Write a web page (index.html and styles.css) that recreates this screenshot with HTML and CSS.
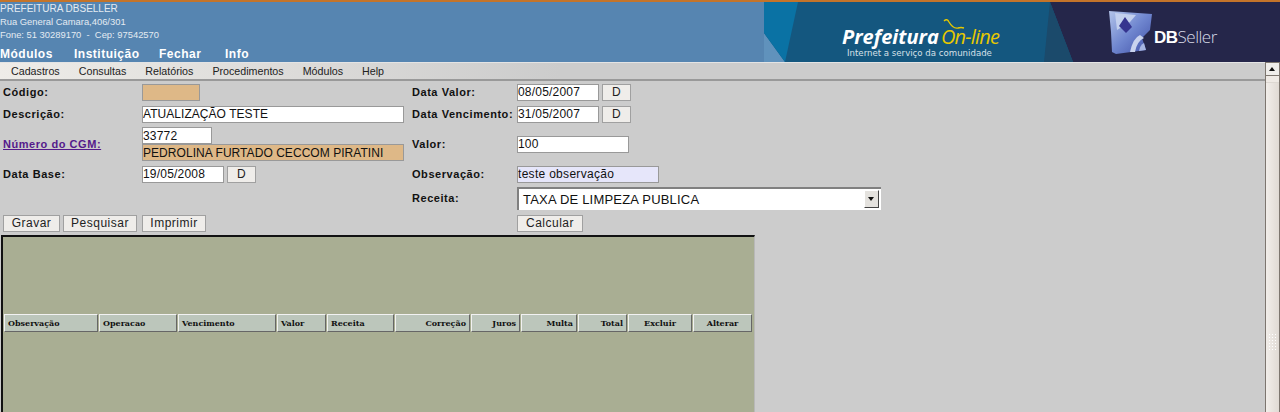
FILE: index.html
```html
<!DOCTYPE html>
<html>
<head>
  <meta http-equiv="CONTENT-TYPE" content="text/html; charset=UTF-8">
  <link rel="stylesheet" href="styles.css">
  <title>Prefeitura On-line</title>
</head>
<body>
  <div class="topo">
    <div class="topo-esq">
      <div class="instituicao">
        <div class="inst-nome">PREFEITURA DBSELLER</div>
        <div>Rua General Camara,406/301</div>
        <div>Fone: 51 30289170 &nbsp;-&nbsp; Cep: 97542570</div>
      </div>
      <div class="menu-topo">
        <a class="m1">Módulos</a>
        <a class="m2">Instituição</a>
        <a class="m3">Fechar</a>
        <a class="m4">Info</a>
      </div>
    </div>
    <div class="banner">
      <svg class="banner-fundo" width="516" height="60" viewBox="0 0 516 60">
        <defs>
          <linearGradient id="cubo" x1="0" y1="0" x2="1" y2="1">
            <stop offset="0" stop-color="#b3c4ea"/>
            <stop offset="0.5" stop-color="#6f86cf"/>
            <stop offset="1" stop-color="#3f4fa6"/>
          </linearGradient>
        </defs>
        <rect width="516" height="60" fill="#14577f"/>
        <polygon points="0,31 21,60 0,60" fill="#6092bc"/>
        <polygon points="0,0 34,0 21,60 0,31" fill="#0a72a4"/>
        <polygon points="286,0 516,0 516,60 309,60" fill="#25264a"/>
        <polygon points="286,0 309,60 280,60" fill="#1b4a6b"/>
        <polygon points="345,9 388,12 386,28 378,36 382,48 352,52 348,50 347,30" fill="url(#cubo)"/>
        <polygon points="351,11 372,13 366,20 353,28" fill="#c3d0ee"/>
        <polygon points="361,15 368,25 362,31 355,24" fill="#35348f"/>
        <path d="M366 50 q3 -14 10 -17 l4 3 q-7 3 -9 14 z" fill="#c9d3ee"/>
        <path d="M375 49 q1 -6 5 -8 l2 7 z" fill="#a7b6e2"/>
      </svg>
      <div class="po-logo">
        <div class="po-nome"><span class="po-pref">Prefeitura</span><span class="po-on">On-line</span></div>
        <div class="po-sub">Internet a serviço da comunidade</div>
      </div>
      <svg class="po-arco" width="24" height="14" viewBox="0 0 24 14">
        <path d="M2 3 q3 -3 5 1 q4 7 9 6 q3 -1 6 0" fill="none" stroke="#e6c800" stroke-width="1.4"/>
      </svg>
      <div class="db-logo"><b>DB</b><span>Seller</span></div>
    </div>
  </div>

  <div class="corpo">
    <div class="conteudo">
      <div class="barra-menu">
        <a>Cadastros</a>
        <a>Consultas</a>
        <a>Relatórios</a>
        <a>Procedimentos</a>
        <a>Módulos</a>
        <a>Help</a>
      </div>

      <form class="form-grid">
        <label class="rotulo">Código:</label>
        <div class="campo"><input class="inp readonly codigo" type="text" readonly></div>
        <label class="rotulo">Data Valor:</label>
        <div class="campo"><input class="inp data" value="08/05/2007"><button type="button" class="btn btn-d">D</button></div>

        <label class="rotulo">Descrição:</label>
        <div class="campo"><input class="inp descricao" value="ATUALIZAÇÃO TESTE"></div>
        <label class="rotulo">Data Vencimento:</label>
        <div class="campo"><input class="inp data" value="31/05/2007"><button type="button" class="btn btn-d">D</button></div>

        <a class="rotulo link">Número do CGM:</a>
        <div class="campo-duplo">
          <input class="inp numcgm" value="33772">
          <input class="inp readonly descricao" value="PEDROLINA FURTADO CECCOM PIRATINI" readonly>
        </div>
        <label class="rotulo">Valor:</label>
        <div class="campo"><input class="inp valor" value="100"></div>

        <label class="rotulo">Data Base:</label>
        <div class="campo"><input class="inp data" value="19/05/2008"><button type="button" class="btn btn-d">D</button></div>
        <label class="rotulo">Observação:</label>
        <div class="campo"><input class="inp obs" value="teste observação"></div>

        <div class="vazio"></div>
        <label class="rotulo">Receita:</label>
        <div class="campo">
          <div class="select">
            <span class="select-txt">TAXA DE LIMPEZA PUBLICA</span>
            <span class="select-seta"></span>
          </div>
        </div>

        <div class="botoes">
          <button type="button" class="btn b-gravar">Gravar</button>
          <button type="button" class="btn b-pesquisar">Pesquisar</button>
          <button type="button" class="btn b-imprimir">Imprimir</button>
        </div>
        <div></div>
        <div class="campo"><button type="button" class="btn b-calcular">Calcular</button></div>
      </form>

      <div class="quadro">
        <table class="tabela">
          <tr>
            <th class="c1">Observação</th>
            <th class="c2">Operacao</th>
            <th class="c3">Vencimento</th>
            <th class="c4">Valor</th>
            <th class="c5">Receita</th>
            <th class="c6 dir">Correção</th>
            <th class="c7 dir">Juros</th>
            <th class="c8 dir">Multa</th>
            <th class="c9 dir">Total</th>
            <th class="c10 meio">Excluir</th>
            <th class="c11 meio">Alterar</th>
          </tr>
        </table>
      </div>
    </div>

    <div class="scroll">
      <div class="scroll-up"></div>
      <div class="scroll-thumb">
        <div class="scroll-grip"></div>
      </div>
    </div>
  </div>
</body>
</html>
```

FILE: styles.css
```css
* {
  margin: 0;
  padding: 0;
  box-sizing: border-box;
}

body {
  width: 100%;
  height: 100vh;
  overflow: hidden;
  background: #cccccc;
  font-family: "Liberation Sans", Arial, sans-serif;
}

.topo {
  display: flex;
  justify-content: space-between;
  height: 62px;
  background: #5685b1;
  border-top: 2px solid #c4742a;
}

.instituicao {
  height: 45px;
  color: #e4ebf2;
  font-size: 9.4px;
  line-height: 13px;
}

.inst-nome {
  font-size: 10px;
}

.menu-topo {
  display: flex;
  color: #ffffff;
  font-size: 12px;
  font-weight: bold;
  letter-spacing: 0.5px;
  line-height: 15px;
}

.m1 { width: 74px; }
.m2 { width: 85px; }
.m3 { width: 66px; }

.banner {
  position: relative;
  width: 516px;
  height: 60px;
}

.banner-fundo {
  display: block;
}

.po-logo {
  position: absolute;
  top: 25px;
  left: 78px;
  width: 170px;
}

.po-nome {
  line-height: 20px;
  white-space: nowrap;
}

.po-pref {
  color: #ffffff;
  font-family: "Open Sans", sans-serif;
  font-size: 20px;
  font-weight: bold;
  font-style: italic;
}

.po-on {
  margin-left: 2px;
  color: #e6c800;
  font-family: "Open Sans", sans-serif;
  font-size: 20px;
  font-style: italic;
  letter-spacing: -0.8px;
}

.po-sub {
  padding-left: 5px;
  color: #d6e0e8;
  font-family: "DejaVu Sans", sans-serif;
  font-size: 8.6px;
  line-height: 9px;
  white-space: nowrap;
}

.po-arco {
  position: absolute;
  top: 16px;
  left: 178px;
}

.db-logo {
  position: absolute;
  top: 25px;
  left: 390px;
  color: #d8dbe8;
  font-size: 17px;
  letter-spacing: -0.5px;
  line-height: 19px;
}

.db-logo b {
  color: #ffffff;
}

.db-logo span {
  font-family: "Open Sans", sans-serif;
  font-weight: 300;
}

.corpo {
  display: flex;
  height: 350px;
}

.conteudo {
  flex: 1;
}

.barra-menu {
  display: flex;
  gap: 19px;
  height: 19px;
  padding-left: 11px;
  background: linear-gradient(to right, #eeece8, #cccccc 560px);
  border-top: 1px solid #e4e4e4;
  border-bottom: 2px solid #999999;
  color: #222222;
  font-size: 10.7px;
  line-height: 16px;
}

.form-grid {
  display: grid;
  grid-template-columns: 139px 270px 105px 1fr;
  grid-template-rows: 22px 22px 38px 22px 26px 24px;
  align-items: center;
  padding-left: 3px;
  color: #111111;
}

.rotulo {
  font-size: 11px;
  font-weight: bold;
  letter-spacing: 0.55px;
}

.link {
  color: #551a8b;
  text-decoration: underline;
}

.vazio {
  grid-column: 1 / 3;
}

.campo {
  display: flex;
  gap: 3px;
  align-items: center;
}

.campo-duplo {
  display: flex;
  flex-direction: column;
}

.inp {
  height: 17px;
  padding: 0;
  background: #ffffff;
  border: 1px solid #999999;
  outline: none;
  color: #111111;
  font-family: "Liberation Sans", Arial, sans-serif;
  font-size: 12px;
  letter-spacing: 0.05px;
}

.readonly {
  background: #deb887;
}

.codigo { width: 58px; }
.descricao { width: 262px; }
.numcgm { width: 70px; letter-spacing: 0.2px; }
.data { width: 82px; letter-spacing: 0.2px; }
.valor { width: 112px; letter-spacing: 0.2px; }

.obs {
  width: 142px;
  background: #e6e6fa;
  letter-spacing: 0.3px;
}

.btn {
  height: 17px;
  padding: 0;
  background: #efedea;
  border: 1px solid #a0a0a0;
  color: #222222;
  font-family: "Liberation Sans", Arial, sans-serif;
  font-size: 12px;
  letter-spacing: 0.5px;
}

.btn-d { width: 29px; }
.b-gravar { width: 57px; }
.b-pesquisar { width: 74px; }
.b-imprimir { width: 64px; margin-left: 2px; }
.b-calcular { width: 66px; }

.select {
  display: flex;
  justify-content: space-between;
  align-items: center;
  width: 364px;
  height: 23px;
  padding: 0 2px 0 4px;
  background: #ffffff;
  border-top: 2px solid #808080;
  border-left: 2px solid #808080;
  font-size: 13px;
  letter-spacing: 0.2px;
  white-space: nowrap;
}

.select-seta {
  position: relative;
  width: 15px;
  height: 18px;
  background: #e4e2de;
  border: 1px solid #ffffff;
  border-right-color: #444444;
  border-bottom-color: #444444;
}

.select-seta::after {
  content: "";
  position: absolute;
  top: 6px;
  left: 3px;
  border: 3.5px solid transparent;
  border-top: 4px solid #111111;
  border-bottom: 0;
}

.botoes {
  display: flex;
  gap: 3px;
  grid-column: 1 / 3;
}

.quadro {
  width: 754px;
  height: 190px;
  margin-left: 1px;
  padding: 76px 0 0 0;
  background: #a9ae93;
  border-top: 2px solid #111111;
  border-left: 2px solid #111111;
  border-right: 1px solid #b8b8b8;
}

.tabela {
  border-spacing: 1px;
  table-layout: fixed;
  width: 750px;
  font-family: "DejaVu Serif", serif;
  font-size: 8px;
}

.tabela th {
  height: 18px;
  padding: 0 3px;
  background: #bcc6bb;
  border: 1px solid;
  border-color: #f2f2f2 #666666 #666666 #f2f2f2;
  color: #111111;
  text-align: left;
  white-space: nowrap;
}

.tabela th.dir {
  text-align: right;
}

.tabela th.meio {
  text-align: center;
}

.c1 { width: 94px; }
.c2 { width: 78px; }
.c3 { width: 98px; }
.c4 { width: 49px; }
.c5 { width: 67px; }
.c6 { width: 75px; }
.c7 { width: 49px; }
.c8 { width: 56px; }
.c9 { width: 49px; }
.c10 { width: 64px; }
.c11 { width: 59px; }

.scroll {
  display: flex;
  flex-direction: column;
  width: 15px;
  background: #efeae5;
  border-left: 1px solid #7d766f;
  border-right: 1px solid #7d766f;
}

.scroll-up {
  position: relative;
  height: 14px;
  background: #efedea;
  border-top: 1px solid #7d766f;
  border-bottom: 1px solid #7d766f;
}

.scroll-up::after {
  content: "";
  position: absolute;
  top: 4px;
  left: 3px;
  border: 3.5px solid transparent;
  border-bottom: 4px solid #111111;
  border-top: 0;
}

.scroll-thumb {
  flex: 1;
  display: flex;
  align-items: flex-end;
  justify-content: center;
  padding-bottom: 62px;
  margin-top: 6px;
  border-top: 1px solid #ddd8d2;
  background: linear-gradient(to right, #f2eeea, #e0dad4);
}

.scroll-grip {
  width: 9px;
  height: 17px;
  background: radial-gradient(#ffffff 40%, transparent 45%) 0 0 / 3px 3px;
}
```
